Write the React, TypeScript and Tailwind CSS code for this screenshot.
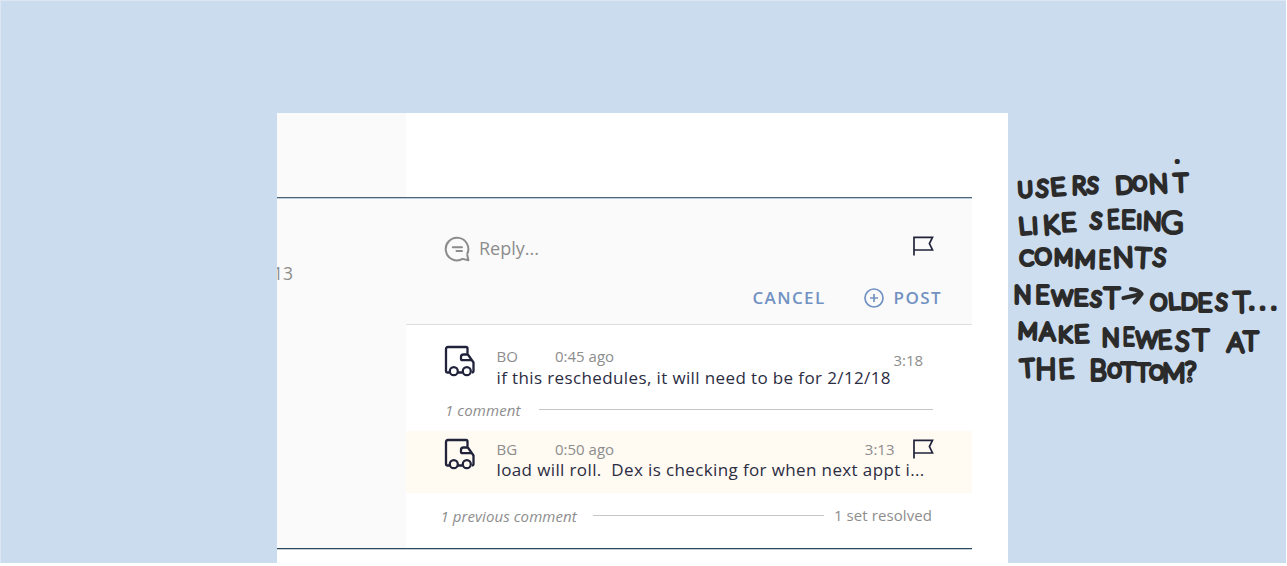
import React from "react";

type Glyph = [char: string, left: number, right: number, top: number, bottom: number, tilt?: number];

// Pen strokes of the note: each word is a list of letters with their bounds, in thirds of a pixel.
const words: Glyph[][] = [
  [["U",26,68,90,147,-3],["S",75,115,82,143,6],["E",122,170,80,142,-5],["R",183,230,76,139],["S",228,264,74,132,6]],
  [["D",322,366,75,137,-3],["O",368,410,75,125],["N",418,475,68,135,-3],["’",493,510,28,60],["T",484,543,66,131,-2]],
  [["L",27,65,198,259,-6],["I",68,84,197,257,-3],["K",100,150,192,259,-4],["E",153,201,184,249,-3]],
  [["S",235,277,180,238,8],["E",291,330,175,241,-3],["E",332,377,178,241],["I",380,396,188,241],["N",400,453,179,244,2],["G",459,514,180,256]],
  [["C",28,71,294,350],["O",80,120,291,349],["M",126,195,292,350],["M",200,250,294,357,2],["E",265,303,294,359],["N",315,366,286,357,-2],["T",370,425,287,357,3],["S",423,469,287,350,8]],
  [["N",13,63,402,464],["E",75,119,403,465],["W",126,187,413,470],["E",190,236,412,472],["S",235,277,416,472,8],["T",280,331,409,480]],
  [["O",421,468,425,483,4],["L",474,512,424,483,-4],["D",518,557,425,484],["E",561,608,424,488],["S",609,657,424,483,6],["T",668,724,420,493,-1],[".",718,733,0,0],[".",750,765,0,0],[".",784,799,0,0]],
  [["M",20,85,511,571,2],["A",88,136,512,576],["K",140,191,520,581],["E",191,239,520,583,-2]],
  [["N",278,327,530,593],["E",337,375,526,592],["W",383,436,538,597,2],["E",443,487,537,602,-3],["S",492,539,538,605,4],["T",546,600,536,607]],
  [["A",652,700,542,610,2],["T",698,747,540,607]],
  [["T",25,83,623,687,-4],["H",83,132,622,693],["E",145,194,622,690,-3]],
  [["B",241,288,626,697],["O",292,336,637,686],["T",331,380,632,700],["T",378,420,635,700],["O",421,461,640,692],["M",463,520,635,703],["?",523,558,629,697,2]],
];

const PEN = 4.2;

function Note() {
  return (
    <svg className="mt-[150px] h-[250px] w-[277px] shrink-0 font-['Lato',sans-serif] font-thin" viewBox="0 0 277 250" fill="#2b2b2b" stroke="#2b2b2b" strokeWidth={PEN} strokeLinejoin="round" strokeLinecap="round" textAnchor="middle">
      {words.map((word, i) => (
        <text key={i}>
          {word.map(([ch, l, r, t, b, tilt = 0], j) => {
            const x = (l + r) / 6;
            if (ch === ".") return <tspan key={j} className="font-['Liberation_Sans',sans-serif]" x={x} y={158.8} fontSize={13}>.</tspan>;
            if (ch === "’") return <tspan key={j} className="font-['Liberation_Sans',sans-serif]" x={x} y={12} fontSize={9}>.</tspan>;
            const size = ((b - t) / 3 - PEN) / 0.72;
            if (ch === "E") {
              return <tspan key={j} x={x} y={b / 3 - PEN / 2} fontSize={size} rotate={tilt} strokeWidth={3.9} textLength={(r - l) * 0.31} lengthAdjust="spacingAndGlyphs">E</tspan>;
            }
            return <tspan key={j} x={x} y={b / 3 - PEN / 2} fontSize={size} rotate={tilt}>{ch}</tspan>;
          })}
        </text>
      ))}
      <path d="M113.5 148 L131.5 144 M121 139 Q129 140 131.5 144 Q129 148 124.5 152.5" fill="none" />
    </svg>
  );
}

function Truck() {
  return (
    <svg className="h-8 w-8" viewBox="0 0 32 32" fill="none" stroke="#20233a" strokeWidth="2.3" strokeLinejoin="round">
      <path d="M5.5 27.5H3.2Q2 27.5 2 26.3V4Q2 2 4 2H22Q23.5 2 23.5 3.5V9L29.5 17.5V26.5Q29.5 27.5 28 27.5M14 27.5H18.5M24 9.5H19.5Q17 9.5 17 12V13.7Q17 15.2 18.5 15.2H28" />
      <circle cx="9.8" cy="26.2" r="4" />
      <circle cx="22.8" cy="26.2" r="4" />
    </svg>
  );
}

function Flag() {
  return (
    <svg className="h-5 w-[21px]" viewBox="0 0 21 20" fill="none" stroke="#20233a" strokeWidth="1.7">
      <path d="M1 19.5V1.3H19.5L16.4 7.6L19.5 14H1" />
    </svg>
  );
}

export default function App() {
  return (
    <div className="h-[566px] w-[1287px] overflow-hidden bg-white font-['Open_Sans',sans-serif] text-[#8d8d8d]">
      <div className="flex h-[563px] w-[1286px] overflow-hidden border-l border-t border-[#dce7f3] bg-[#cbdcee] pl-[276px]">
        <main className="mt-[112px] flex h-[451px] w-[731px] shrink-0 flex-col bg-white">
          <div className="flex h-[84px]"><div className="w-[129px] bg-[#fafafa]" /></div>
          <section className="flex h-[352px] w-[695px] flex-col border-b border-t border-b-[#274a63] border-t-[#4a6579] shadow-[0_1px_0_#c9ced3]">
            <div className="flex h-full">
              <aside className="w-[129px] shrink-0 overflow-hidden border-t border-[#bccddb] bg-[#fafafa] pt-[62px]">
                <p className="-ml-[4px] text-[17.5px] leading-6">13</p>
              </aside>
              <div className="flex w-[566px] flex-col">
                <div className="h-[127px] shrink-0 border-b border-t border-b-[#dedede] border-t-[#bccddb] bg-[#fafafa]">
                  <div className="flex h-[72px] px-[38px] pt-[37px]">
                    <svg className="h-[26px] w-[27px]" viewBox="0 0 27 26" fill="none" stroke="#8b8b8b" strokeWidth="2" strokeLinejoin="round">
                      <path d="M23.1 18.2A11.3 11.3 0 1 0 18.6 22.9L24.4 24.3L23.1 18.2" />
                      <path d="M8.8 11.2H18M12.5 15H18" strokeLinecap="round" />
                    </svg>
                    <span className="ml-2 text-[18px] leading-6">Reply...</span>
                    <span className="ml-auto"><Flag /></span>
                  </div>
                  <div className="flex items-center justify-end pr-[30px] pt-[15px] text-[17px] font-semibold leading-6 tracking-[1.4px] text-[#7192c2]">
                    <span>CANCEL</span>
                    <svg className="ml-[38px] mr-[10px] h-5 w-5" viewBox="0 0 20 20" fill="none" stroke="#7192c2" strokeWidth="1.7"><circle cx="10" cy="10" r="9" /><path d="M6 10H14M10 6V14" /></svg>
                    <span>POST</span>
                  </div>
                </div>
                <article className="flex h-[76px] shrink-0 pl-[38px] pt-[20px]">
                  <Truck />
                  <div className="ml-[20.5px] w-[397px]">
                    <div className="-mt-px flex text-[15px] leading-6"><span className="w-[58.5px]">BO</span><span>0:45 ago</span></div>
                    <p className="-mt-[2px] whitespace-pre text-[17px] leading-6 tracking-[0.38px] text-[#2b2d42]">if this reschedules, it will need to be for 2/12/18</p>
                  </div>
                  <time className="pt-[3px] text-[15px] leading-6">3:18</time>
                </article>
                <div className="flex h-[30px] shrink-0 items-start px-[39px] text-[15px] italic leading-5">
                  <span className="-mt-px w-[94px] tracking-[0.1px]">1 comment</span><i className="mt-[8px] h-px flex-1 bg-[#c5c5c5]" />
                </div>
                <article className="flex h-[62px] shrink-0 bg-[#fffaf2] pl-[38px] pt-[7px]">
                  <Truck />
                  <div className="ml-[20.5px] w-[437px]">
                    <div className="-mt-px flex text-[15px] leading-6"><span className="w-[58.5px]">BG</span><span>0:50 ago</span><time className="ml-auto mr-[18px]">3:13</time><span className="pt-[2px]"><Flag /></span></div>
                    <p className="-mt-[3px] whitespace-pre text-[17px] leading-6 tracking-[0.38px] text-[#2b2d42]">load will roll.  Dex is checking for when next appt i...</p>
                  </div>
                </article>
                <div className="flex items-start pl-[34.5px] pr-[40px] pt-[13px] text-[15px] leading-5 tracking-[0.08px]">
                  <span className="w-[152.5px] italic">1 previous comment</span><i className="mr-[10px] mt-[9px] h-px flex-1 bg-[#c5c5c5]" /><span className="-mt-px">1 set resolved</span>
                </div>
              </div>
            </div>
          </section>
        </main>
        <div className="ml-[2px]"><div className="-mt-px"><Note /></div></div>
      </div>
    </div>
  );
}
